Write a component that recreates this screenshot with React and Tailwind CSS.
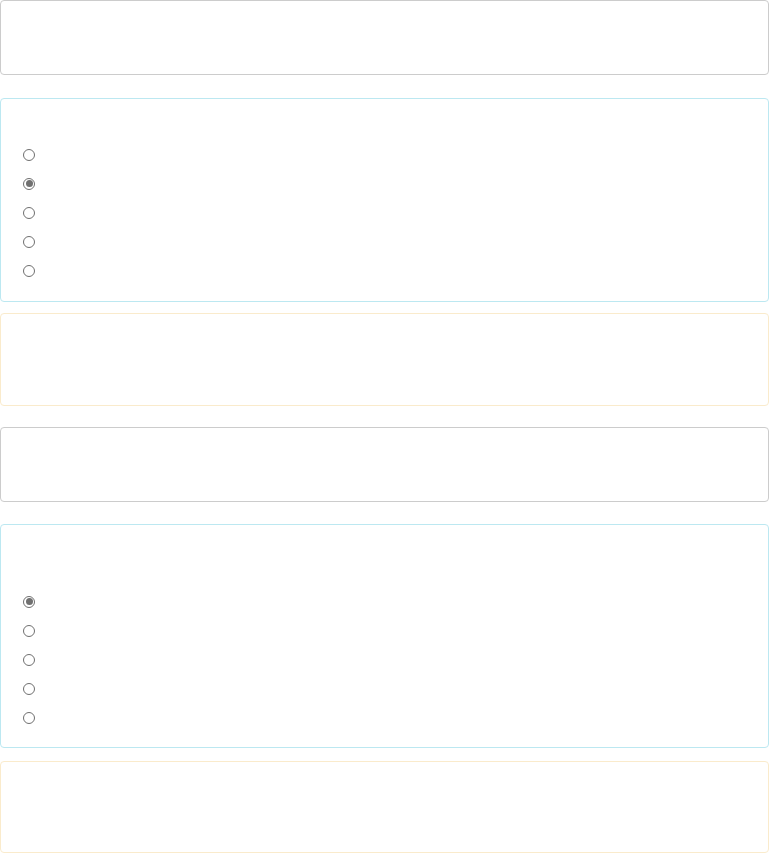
const Radio = ({ checked }) => (
  <div className="flex h-[29px] items-center">
    <span className="flex h-[12px] w-[12px] items-center justify-center rounded-full border border-[#6f6f6f] bg-white">
      {checked && <span className="h-[7px] w-[7px] rounded-full bg-[#707070]"></span>}
    </span>
  </div>
);

const App = () => {
  return (
    <div className="min-h-screen bg-white font-['Liberation_Sans',sans-serif]">
      {/* first group */}
      <div className="h-[75px] rounded-[4px] border border-[#cccccc] bg-white"></div>

      <div className="mt-[23px] rounded-[4px] border border-[#bce8f1] bg-white pl-[22px] pt-[41px] pb-[16px]">
        {[0, 1, 2, 3, 4].map((i) => (
          <Radio key={i} checked={i === 1} />
        ))}
      </div>

      <div className="mt-[11px] h-[93px] rounded-[4px] border border-[#faebcc] bg-white"></div>

      {/* second group */}
      <div className="mt-[21px] h-[75px] rounded-[4px] border border-[#cccccc] bg-white"></div>

      <div className="mt-[22px] rounded-[4px] border border-[#bce8f1] bg-white pl-[22px] pt-[62px] pb-[15px]">
        {[0, 1, 2, 3, 4].map((i) => (
          <Radio key={i} checked={i === 0} />
        ))}
      </div>

      <div className="mt-[13px] h-[92px] rounded-[4px] border border-[#faebcc] bg-white"></div>
    </div>
  );
};

export default App;
